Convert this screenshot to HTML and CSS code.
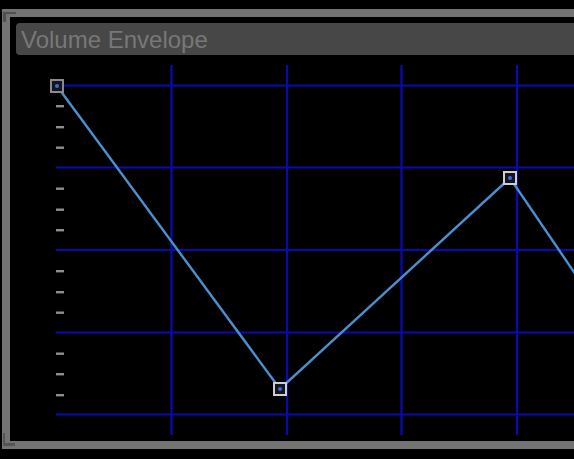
FILE: index.html
```html
<!DOCTYPE html>
<html>
<head>
<meta charset="utf-8">
<link rel="stylesheet" href="styles.css">
</head>
<body>
<div class="viewport">
<div class="frame">
  <div class="header">Volume Envelope</div>
  <svg class="graph" width="600" height="386" viewBox="10 55 600 386" xmlns="http://www.w3.org/2000/svg">
    <g class="grid">
      <line x1="171.5" y1="65" x2="171.5" y2="435"/>
      <line x1="287" y1="65" x2="287" y2="435"/>
      <line x1="401.5" y1="65" x2="401.5" y2="435"/>
      <line x1="517" y1="65" x2="517" y2="435"/>
      <line x1="56" y1="85.5" x2="610" y2="85.5"/>
      <line x1="56" y1="167.5" x2="610" y2="167.5"/>
      <line x1="56" y1="250" x2="610" y2="250"/>
      <line x1="56" y1="332.5" x2="610" y2="332.5"/>
      <line x1="56" y1="414.5" x2="610" y2="414.5"/>
    </g>
    <g class="ticks">
      <rect x="56" y="105" width="8" height="2.4"/>
      <rect x="56" y="126" width="8" height="2.4"/>
      <rect x="56" y="146.5" width="8" height="2.4"/>
      <rect x="56" y="187.5" width="8" height="2.4"/>
      <rect x="56" y="208.5" width="8" height="2.4"/>
      <rect x="56" y="229" width="8" height="2.4"/>
      <rect x="56" y="270" width="8" height="2.4"/>
      <rect x="56" y="291" width="8" height="2.4"/>
      <rect x="56" y="311.5" width="8" height="2.4"/>
      <rect x="56" y="352.5" width="8" height="2.4"/>
      <rect x="56" y="373" width="8" height="2.4"/>
      <rect x="56" y="394" width="8" height="2.4"/>
    </g>
    <polyline class="env" points="57,86 280,389 510,178 610,325"/>
    <g class="node dim">
      <rect x="51" y="80" width="12" height="12"/>
      <circle cx="57" cy="86" r="2"/>
    </g>
    <g class="node">
      <rect x="274" y="383" width="12" height="12"/>
      <circle cx="280" cy="389" r="2"/>
    </g>
    <g class="node">
      <rect x="504" y="172" width="12" height="12"/>
      <circle cx="510" cy="178" r="2"/>
    </g>
  </svg>
</div>
</div>
</body>
</html>
```

FILE: styles.css
```css
html, body {
  margin: 0;
  padding: 0;
  background: #000;
}

.viewport {
  width: 574px;
  height: 459px;
  overflow: hidden;
}

.frame {
  position: relative;
  margin: 9px 0 0 2px;
  width: 700px;
  height: 424px;
  border: 8px solid #737373;
  background: #000;
  display: flex;
  flex-direction: column;
}

.frame::before {
  content: "";
  position: absolute;
  left: -7px;
  top: -5px;
  width: 10px;
  height: 8px;
  border-left: 3px solid #505050;
  border-top: 2px solid #505050;
}

.frame::after {
  content: "";
  position: absolute;
  left: -7px;
  bottom: -5px;
  width: 10px;
  height: 10px;
  border-left: 2px solid #555;
  border-bottom: 3px solid #555;
}

.header {
  margin: 6px 0 0 6px;
  height: 32px;
  background: #474747;
  border-radius: 4px;
  color: #787878;
  font-family: "Liberation Sans", Arial, sans-serif;
  font-size: 24px;
  line-height: 34px;
  padding-left: 5px;
  box-sizing: border-box;
  flex: none;
}

.graph {
  display: block;
  flex: none;
}

.grid line {
  stroke: #0a0ab4;
  stroke-width: 2.2;
}

.ticks rect {
  fill: #8e8e8e;
}

.env {
  fill: none;
  stroke: #4a8fd0;
  stroke-width: 2.4;
}

.node rect {
  fill: #151520;
  stroke: #cfcfcf;
  stroke-width: 2;
}

.node.dim rect {
  stroke: #8a8a8a;
}

.node circle {
  fill: #3a6fd8;
}
```
